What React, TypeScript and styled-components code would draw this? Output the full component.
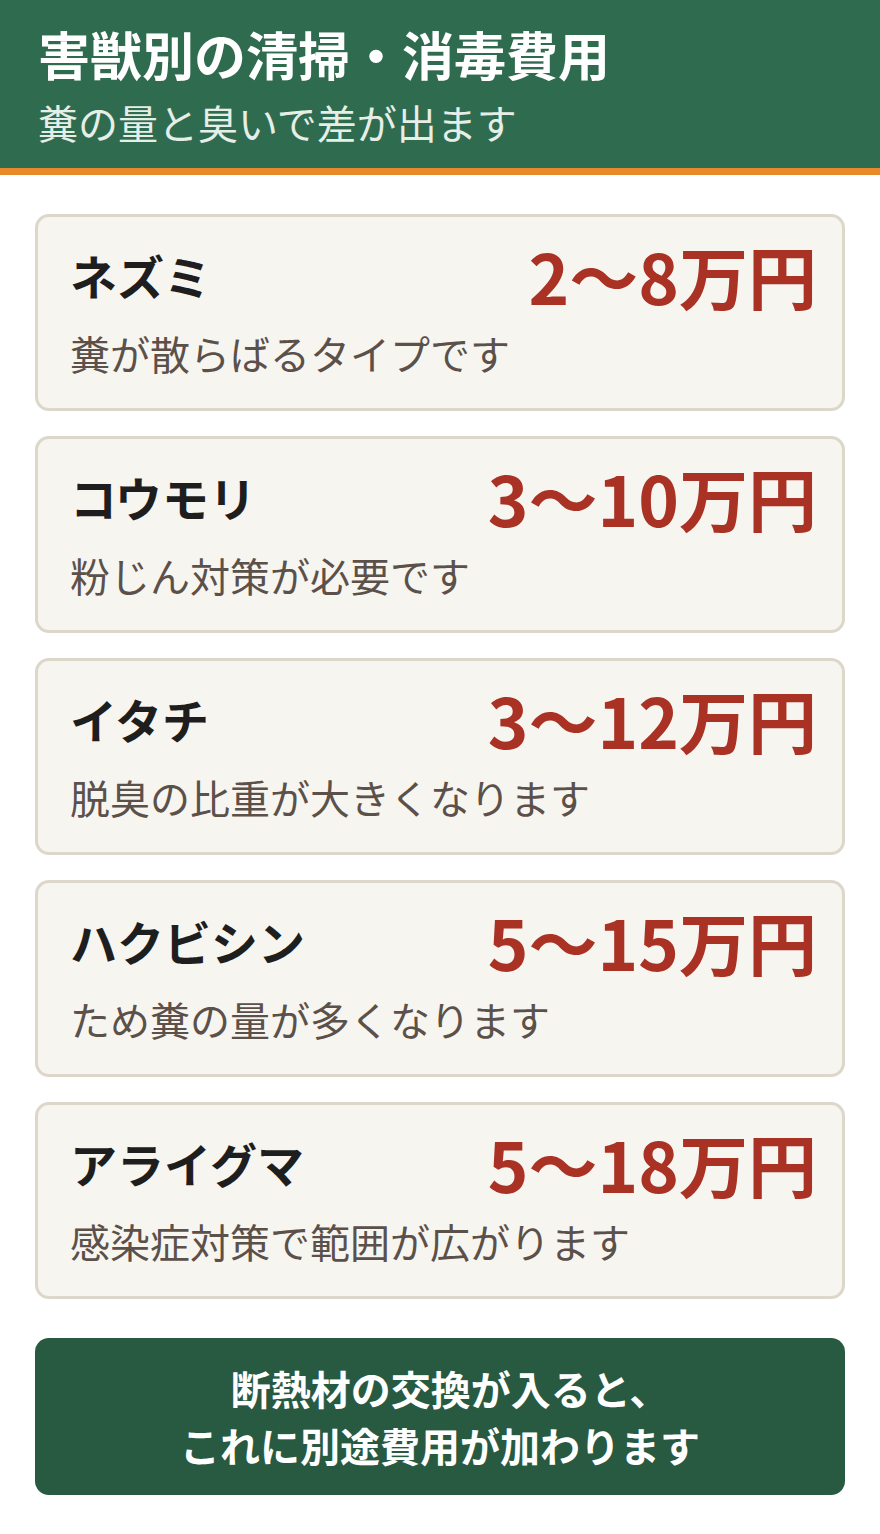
import { FC } from 'react';
import styled, { createGlobalStyle } from 'styled-components';

const GlobalStyle = createGlobalStyle`
    body {
        margin: 0;
        background: #ffffff;
        font-family: 'Noto Sans CJK JP', 'Noto Sans', sans-serif;
    }
`;

interface IPestCost {
    name: string;
    price: string;
    note: string;
}

const costs: IPestCost[] = [
    { name: 'ネズミ', price: '2〜8万円', note: '糞が散らばるタイプです' },
    { name: 'コウモリ', price: '3〜10万円', note: '粉じん対策が必要です' },
    { name: 'イタチ', price: '3〜12万円', note: '脱臭の比重が大きくなります' },
    { name: 'ハクビシン', price: '5〜15万円', note: 'ため糞の量が多くなります' },
    { name: 'アライグマ', price: '5〜18万円', note: '感染症対策で範囲が広がります' },
];

const Page = styled.div`
    width: 880px;
`;

const Header = styled.header`
    background: #2f6b4f;
    border-bottom: 7px solid #e8892a;
    padding: 18px 38px 18px;
    height: 175px;
    box-sizing: border-box;
`;

const Title = styled.h1`
    margin: 0;
    color: #ffffff;
    font-size: 52px;
    font-weight: 700;
    line-height: 72px;
`;

const Subtitle = styled.p`
    margin: 4px 0 0;
    color: #e6eee8;
    font-size: 40px;
    font-weight: 400;
    line-height: 56px;
`;

const List = styled.main`
    display: flex;
    flex-direction: column;
    gap: 25px;
    padding: 39px 35px 36px;
`;

const Card = styled.section`
    background: #f7f5f0;
    border: 3px solid #ddd6cb;
    border-radius: 14px;
    padding: 18px 25px 30px 32px;
    height: 197px;
    box-sizing: border-box;
`;

const CardTop = styled.div`
    display: flex;
    justify-content: space-between;
    align-items: center;
`;

const Name = styled.h2`
    margin: 0;
    color: #1e1e1e;
    font-size: 47px;
    font-weight: 700;
    line-height: 64px;
`;

const Price = styled.div`
    color: #a93224;
    font-size: 69px;
    font-weight: 700;
    line-height: 80px;
`;

const Note = styled.p`
    margin: 12px 0 0;
    color: #5b514a;
    font-size: 40px;
    font-weight: 400;
    line-height: 52px;
`;

const Banner = styled.div`
    margin-top: 14px;
    background: #285a41;
    border-radius: 14px;
    padding: 20px 20px;
    height: 157px;
    box-sizing: border-box;
    display: flex;
    align-items: center;
    justify-content: center;
    text-align: center;
    color: #ffffff;
    font-size: 40px;
    font-weight: 700;
    line-height: 57px;
`;

// trailing comma sits half-width at the line end
const LineEndComma = styled.span`
    margin-right: -20px;
`;

const App: FC = () => {
    return (
        <Page>
            <GlobalStyle />
            <Header>
                <Title>害獣別の清掃・消毒費用</Title>
                <Subtitle>糞の量と臭いで差が出ます</Subtitle>
            </Header>
            <List>
                {costs.map(c => (
                    <Card key={c.name}>
                        <CardTop>
                            <Name>{c.name}</Name>
                            <Price>{c.price}</Price>
                        </CardTop>
                        <Note>{c.note}</Note>
                    </Card>
                ))}
                <Banner>
                    <div>
                        断熱材の交換が入ると<LineEndComma>、</LineEndComma>
                        <br />
                        これに別途費用が加わります
                    </div>
                </Banner>
            </List>
        </Page>
    );
};

export default App;
